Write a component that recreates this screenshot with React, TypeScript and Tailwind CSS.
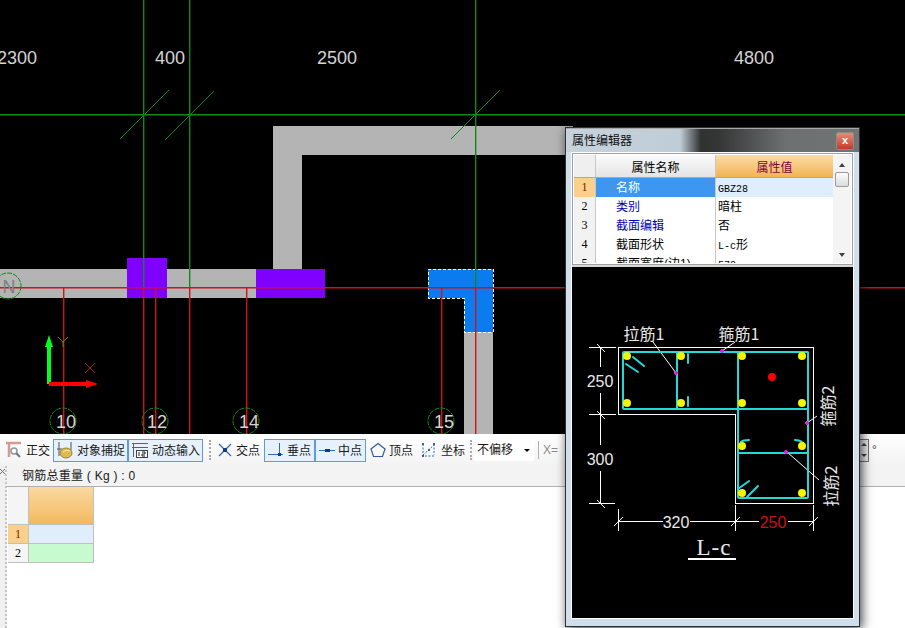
import React from "react";

const grid = "#0f8a16";
const red = "#d01414";
const cyan = "#22d8d8";

function CanvasDrawing() {
  return (
    <svg width="905" height="434" viewBox="0 0 905 434" className="block">
      <rect x="0" y="269" width="127" height="29" fill="#b4b4b4" />
      <rect x="167" y="269" width="89" height="29" fill="#b4b4b4" />
      <rect x="273" y="126" width="29" height="143" fill="#b4b4b4" />
      <rect x="273" y="126" width="300" height="29" fill="#b4b4b4" />
      <rect x="464" y="332" width="29" height="102" fill="#b4b4b4" />
      <rect x="127" y="258" width="40" height="40" fill="#7f00ff" />
      <rect x="256" y="269" width="69" height="29" fill="#7f00ff" />
      <path d="M428 269H493V332H464V298H428Z" fill="#0a7cf0" stroke="#fff" strokeDasharray="3 2" shapeRendering="crispEdges" />
      <g stroke={grid} strokeWidth="1.4">
        <line x1="0" y1="114.7" x2="905" y2="114.7" />
        <line x1="143.7" y1="0" x2="143.7" y2="287" />
        <line x1="189.7" y1="0" x2="189.7" y2="287" />
        <line x1="475.7" y1="0" x2="475.7" y2="287" />
      </g>
      <g stroke={grid}>
        <line x1="120" y1="139" x2="169" y2="90" />
        <line x1="165" y1="140" x2="214" y2="91" />
        <line x1="451" y1="139" x2="500" y2="90" />
      </g>
      <g stroke={red} strokeWidth="1.4">
        <line x1="0" y1="287.7" x2="905" y2="287.7" />
        {[63, 143, 155, 189, 246, 441, 475].map((x) => (
          <line key={x} x1={x + 0.7} y1="287" x2={x + 0.7} y2="434" />
        ))}
      </g>
      <g fill="none" stroke={grid} strokeDasharray="5 1">
        {[[63, 421], [155, 421], [246, 421], [441, 421], [8, 286]].map(([x, y]) => (
          <circle key={x} cx={x} cy={y} r="13" />
        ))}
      </g>
      <g fill="#d4d4d4" fontSize="18" fontFamily="'Liberation Sans', sans-serif">
        <text x="17" y="64" textAnchor="middle">2300</text>
        <text x="170" y="64" textAnchor="middle">400</text>
        <text x="337" y="64" textAnchor="middle">2500</text>
        <text x="754" y="64" textAnchor="middle">4800</text>
        <text x="66" y="428" textAnchor="middle">10</text>
        <text x="157" y="428" textAnchor="middle">12</text>
        <text x="249" y="428" textAnchor="middle">14</text>
        <text x="444" y="428" textAnchor="middle">15</text>
      </g>
      <text x="9" y="293" fill="#808080" fontSize="18" textAnchor="middle" fontFamily="'Liberation Sans', sans-serif">N</text>
      <path d="M47 384V347H45L49 335L53 347H51V384Z" fill="#00ff20" />
      <path d="M49 382H86V380L98 384L86 388V386H49Z" fill="#ff0000" />
      <path d="M58 337L63 342L68 337M63 342V347" stroke="#6a8a20" fill="none" />
      <path d="M85 363L95 373M95 363L85 373" stroke="#a82020" fill="none" />
    </svg>
  );
}

function SectionDrawing() {
  const dots = [[627, 357], [681, 357], [742, 357], [802, 357], [627, 404], [681, 404], [742, 404], [802, 404], [742, 447], [802, 447], [742, 494], [802, 494]];
  const mag = [[722, 352], [676, 374], [807, 424], [786, 453]];
  const cjk = "'Noto Sans CJK SC', sans-serif";
  const lat = "'Liberation Sans', sans-serif";
  return (
    <svg width="281" height="349" viewBox="572 268 281 349" className="block">
      <g stroke="#fff" fill="none" shapeRendering="crispEdges">
        <path d="M618.5 348.5H813.5V504.5H735.5V415.5H618.5Z" />
        <path d="M589 348.5H616M589 415.5H616M589 504.5H615" />
        <path d="M600.5 348V368M600.5 394V446M600.5 472V504" />
        <path d="M618.5 510V532M735.5 506V532M813.5 506V532" />
        <path d="M618 522.5H663M690 522.5H759M788 522.5H813" />
      </g>
      <g stroke="#fff" fill="none">
        <path d="M597 345L605 353M597 412L605 420M597 501L605 509" />
        <path d="M614 527L623 518M731 527L740 518M809 527L818 518" />
        <path d="M653 343L676 374M735 343L722 352M817 417L807 424M787 453L819 481" />
      </g>
      <g stroke={cyan} strokeWidth="2" fill="none" strokeLinecap="round">
        <rect x="623" y="353" width="185" height="57" rx="1" />
        <rect x="738" y="353" width="70" height="146" rx="1" />
        <path d="M677 354V409M738 454H808" />
        <path d="M633 358L644 367M626 365L638 373" />
        <path d="M688 355V364M688 398V407M741 443Q743 441 749 441M795 441Q800 441 803 444" />
        <path d="M738 490L749 482M747 498L758 487" />
      </g>
      {dots.map(([x, y]) => (
        <circle key={`${x}-${y}`} cx={x} cy={y} r="4" fill="#f5f500" />
      ))}
      <circle cx="772" cy="378" r="4" fill="#ff0000" />
      {mag.map(([x, y]) => (
        <path key={x} d={`M${x - 2} ${y}H${x + 2}M${x} ${y - 2}V${y + 2}`} stroke="#e020e0" strokeWidth="2" fill="none" />
      ))}
      <g fill="#e8e8e8" fontSize="16" fontFamily={lat}>
        <text x="600" y="388" textAnchor="middle">250</text>
        <text x="600" y="466" textAnchor="middle">300</text>
        <text x="676" y="529" textAnchor="middle">320</text>
        <text x="773" y="529" textAnchor="middle" fill="#d01010">250</text>
      </g>
      <g fill="#e8e8e8" fontSize="16" fontFamily={cjk}>
        <text x="644" y="341" textAnchor="middle">拉筋1</text>
        <text x="739" y="341" textAnchor="middle">箍筋1</text>
        <text x="0" y="0" textAnchor="middle" transform="translate(827 407) rotate(-90)" dominantBaseline="central">箍筋2</text>
        <text x="0" y="0" textAnchor="middle" transform="translate(830 487) rotate(-90)" dominantBaseline="central">拉筋2</text>
      </g>
      <text x="714" y="556" textAnchor="middle" fill="#e8e8e8" fontSize="23" letterSpacing="1" fontFamily="'Liberation Serif', serif">L-c</text>
      <rect x="688" y="559" width="48" height="2" fill="#fff" />
    </svg>
  );
}

const mono = "font-['Liberation_Mono','Noto_Sans_CJK_SC',monospace] text-[10px]";

const rows = [
  { n: "1", name: "名称", value: <span className={mono}>GBZ28</span>, cn: "bg-[#3d96f0] text-white", vn: "bg-[#dfeefc] text-black", hn: "bg-[#fad08c] text-[#7a1a00]" },
  { n: "2", name: "类别", value: "暗柱", cn: "bg-white text-[#0000c0]", vn: "bg-white text-black", hn: "bg-[#f2f2f2] text-black" },
  { n: "3", name: "截面编辑", value: "否", cn: "bg-white text-[#0000c0]", vn: "bg-white text-black", hn: "bg-[#f2f2f2] text-black" },
  { n: "4", name: "截面形状", value: <><span className={mono}>L-c</span>形</>, cn: "bg-white text-black", vn: "bg-white text-black", hn: "bg-[#f2f2f2] text-black" },
  { n: "5", name: "截面宽度(边1)", value: <span className={mono}>570</span>, cn: "bg-white text-black", vn: "bg-white text-black", hn: "bg-[#f2f2f2] text-black" },
];

function PropertyTable() {
  return (
    <div className="flex h-[112px] border border-[#a0a0a0] bg-white p-px">
      <div className="h-[108px] w-[260px] overflow-hidden">
        <div className="grid h-[23px] grid-cols-[22px_120px_117px] border-b border-[#a8a8a8]">
          <div className="border-r border-[#c8c8c8] bg-[#efefef]" />
          <div className="flex items-center justify-center border-r border-[#c8c8c8] bg-gradient-to-b from-[#fbfbfb] to-[#e4e4e4] pt-[3px] text-[12px] text-black">属性名称</div>
          <div className="flex items-center justify-center bg-gradient-to-b from-[#fbdca6] to-[#f2b452] pt-[3px] text-[12px] text-[#800040]">属性值</div>
        </div>
        {rows.map((r) => (
          <div key={r.n} className="grid h-[19px] grid-cols-[22px_120px_117px] border-b border-[#b8b8b8] text-[12px] leading-[21px]">
            <div className={`border-r border-[#c8c8c8] text-center font-['Liberation_Serif',serif] leading-[18px] ${r.hn}`}>{r.n}</div>
            <div className={`border-r border-[#c8c8c8] pl-[20px] ${r.cn}`}>{r.name}</div>
            <div className={`pl-[2px] ${r.vn}`}>{r.value}</div>
          </div>
        ))}
      </div>
      <div className="flex h-[108px] w-[18px] flex-col items-center bg-[#f4f4f4]">
        <span className="mt-[8px] h-0 w-0 border-x-[3px] border-b-[4px] border-x-transparent border-b-[#404040]" />
        <span className="mt-[5px] h-[15px] w-[14px] rounded-[2px] border border-[#9a9a9a] bg-gradient-to-b from-[#fdfdfd] to-[#dcdcdc]" />
        <span className="mt-auto mb-[6px] h-0 w-0 border-x-[3px] border-t-[4px] border-x-transparent border-t-[#404040]" />
      </div>
    </div>
  );
}

function Dialog() {
  return (
    <div className="absolute top-[127px] left-[565px] flex h-[500px] w-[295px] flex-col border border-[#303030] bg-[#cfdfec] px-[5px] pb-[7px] shadow-[2px_2px_10px_rgba(0,0,0,0.75)]">
      <div className="-mx-[5px] flex h-[24px] shrink-0 items-center justify-between border-t border-[#a8a8a8] bg-[linear-gradient(90deg,#c6d2dc_0%,#c0ccd6_39%,#303232_46%,#343636_52%,#6c7070_75%,#707474_100%)] pr-[5px] pl-[6px]">
        <span className="text-[12px] text-[#101010]">属性编辑器</span>
        <span className="flex h-[18px] w-[18px] items-center justify-center rounded-[2px] border border-[#8a8a8a] bg-gradient-to-b from-[#e88a78] to-[#c03a28] text-[11px] leading-none font-bold text-white">x</span>
      </div>
      <div className="flex min-h-0 flex-1 flex-col gap-[2px] border border-white bg-[#d8d8d8]">
        <PropertyTable />
        <div className="flex-1 overflow-hidden bg-black">
          <SectionDrawing />
        </div>
      </div>
    </div>
  );
}

const Ortho = () => (
  <svg width="18" height="18" viewBox="0 0 18 18" fill="none">
    <path d="M1 2H16M4 2V16" stroke="#d89a90" strokeWidth="2.5" />
    <circle cx="9" cy="10" r="3" stroke="#8a9aa8" strokeWidth="1.5" />
    <path d="M11 12L15 16" stroke="#6a7a88" strokeWidth="2" />
  </svg>
);
const Snap = () => (
  <svg width="18" height="20" viewBox="0 0 18 20" fill="none">
    <path d="M3 2V16M15 2V10" stroke="#505050" />
    <path d="M1 9H6" stroke="#505050" />
    <ellipse cx="10" cy="13" rx="6" ry="5" fill="#e0b850" stroke="#a08030" />
    <path d="M7 12Q10 9 14 11" stroke="#fff0b0" />
  </svg>
);
const Dyn = () => (
  <svg width="18" height="18" viewBox="0 0 18 18" fill="none">
    <path d="M1 2.5H17M1 6.5H17M2.5 2V16" stroke="#606060" />
    <rect x="5.5" y="9.5" width="11" height="7" fill="#fff" stroke="#404040" />
    <path d="M8 11V15M11 11H14V13H11V15H14" stroke="#202020" />
  </svg>
);
const Cross = () => (
  <svg width="16" height="16" viewBox="0 0 16 16" fill="none">
    <path d="M2 2L14 14M14 2L2 14" stroke="#2a6cc0" strokeWidth="1.3" />
    <rect x="6" y="6" width="4" height="4" fill="#153a80" />
  </svg>
);
const Perp = () => (
  <svg width="16" height="16" viewBox="0 0 16 16" fill="none">
    <path d="M0 12.5H15M11.5 1V14" stroke="#2a6cc0" />
    <rect x="10" y="11" width="3" height="3" fill="#153a80" />
  </svg>
);
const Mid = () => (
  <svg width="16" height="16" viewBox="0 0 16 16" fill="none">
    <path d="M0 8.5H16" stroke="#2a6cc0" />
    <rect x="6" y="7" width="5" height="3" fill="#153a80" />
  </svg>
);
const Vertex = () => (
  <svg width="16" height="16" viewBox="0 0 16 16" fill="none">
    <path d="M8 1.5L15 7L12.5 14.5H3.5L1 7Z" stroke="#2a5ca0" strokeWidth="1.2" />
  </svg>
);
const Coord = () => (
  <svg width="18" height="18" viewBox="0 0 18 18" fill="none">
    <path d="M3 3V15H15" stroke="#2a6cc0" strokeDasharray="2 1.5" />
    <path d="M14 3V14M3 14L14 4" stroke="#2a6cc0" strokeDasharray="2 1.5" />
    <circle cx="3" cy="3" r="1" fill="#203a60" />
    <circle cx="14" cy="3" r="1" fill="#203a60" />
    <circle cx="3" cy="15" r="1" fill="#203a60" />
    <circle cx="9" cy="9" r="1" fill="#203a60" />
  </svg>
);

function Tool({ icon, label, on, w }: { icon: React.ReactNode; label: string; on?: boolean; w: string }) {
  return (
    <div className={`flex h-[23px] items-center gap-[3px] ${w} ${on ? "justify-center border border-[#5a9ce0] bg-[#e6f1fb]" : "justify-start"}`}>
      {icon}
      <span className="pt-[1px] whitespace-nowrap text-[12px] text-[#1a1a1a]">{label}</span>
    </div>
  );
}

const Sep = () => <div className="h-[20px] w-0 border-l-2 border-dotted border-[#a8a8a8]" />;

function Toolbar() {
  return (
    <div className="flex h-[32px] shrink-0 items-center bg-gradient-to-b from-white to-[#f3f3f3] pl-[5px]">
      <Tool icon={<Ortho />} label="正交" w="w-[48px]" />
      <Tool icon={<Snap />} label="对象捕捉" on w="w-[75px]" />
      <Tool icon={<Dyn />} label="动态输入" on w="w-[75px]" />
      <div className="mx-[6px]"><Sep /></div>
      <Tool icon={<Cross />} label="交点" w="w-[47px]" />
      <Tool icon={<Perp />} label="垂点" on w="w-[51px]" />
      <Tool icon={<Mid />} label="中点" on w="w-[51px]" />
      <div className="w-[4px]" />
      <Tool icon={<Vertex />} label="顶点" w="w-[50px]" />
      <Tool icon={<Coord />} label="坐标" w="w-[50px]" />
      <Sep />
      <div className="ml-[2px] flex h-[22px] w-[60px] items-center justify-between bg-white pr-[4px] pl-[3px] text-[12px] text-[#1a1a1a]">
        不偏移
        <span className="h-0 w-0 border-x-[3px] border-t-[3px] border-x-transparent border-t-black" />
      </div>
      <div className="mx-[4px] h-[18px] border-l border-[#b0b0b0]" />
      <span className="text-[12px] text-[#8a8a8a]">X=</span>
      <div className="ml-[300px] flex h-[23px] w-[11px] flex-col items-center justify-around border border-[#707070] bg-[#ececec]">
        <span className="h-0 w-0 border-x-[3px] border-b-[3px] border-x-transparent border-b-[#404040]" />
        <span className="h-0 w-0 border-x-[3px] border-t-[3px] border-x-transparent border-t-[#404040]" />
      </div>
      <span className="ml-[3px] text-[12px] text-[#404040]">°</span>
    </div>
  );
}

function BottomTable() {
  return (
    <div className="flex min-w-0 flex-1 flex-col">
      <div className="flex h-[20px] shrink-0 items-center bg-[#f3f3f3] pl-[15px] text-[12px] tracking-[0.25px] text-[#202020]">钢筋总重量&nbsp;(&nbsp;Kg&nbsp;)&nbsp;:&nbsp;0</div>
      <div className="flex-1 border-t border-[#b0b0b0] bg-white pl-px">
        <div className="grid w-[86px] grid-cols-[21px_65px]">
          <div className="h-[38px] border-r border-b border-[#c0c0c0] bg-[#f5f5f5]" />
          <div className="h-[38px] border-r border-b border-[#c0c0c0] bg-gradient-to-b from-[#fbd9a0] to-[#f2b95e]" />
          <div className="h-[19px] border-r border-b border-[#c0c0c0] bg-[#fad08c] text-center font-['Liberation_Serif',serif] text-[12px] leading-[18px] text-[#7a1a00]">1</div>
          <div className="h-[19px] border-r border-b border-[#c0c0c0] bg-[#e0eefc]" />
          <div className="h-[19px] border-r border-b border-[#c0c0c0] bg-[#f5f5f5] text-center font-['Liberation_Serif',serif] text-[12px] leading-[18px] text-black">2</div>
          <div className="h-[19px] border-r border-b border-[#c0c0c0] bg-[#c8fad0]" />
        </div>
      </div>
    </div>
  );
}

export default function App() {
  return (
    <div className="relative flex h-[628px] w-[905px] flex-col overflow-hidden bg-[#f3f3f3] font-['Liberation_Sans','Noto_Sans_CJK_SC',sans-serif]">
      <div className="h-[434px] shrink-0 bg-black">
        <CanvasDrawing />
      </div>
      <Toolbar />
      <div className="flex min-h-0 flex-1">
        <div className="flex w-[7px] shrink-0 flex-col items-center border-r-2 border-dotted border-[#c4c4c4] bg-[#f0f0f0] pt-[2px]">
          <svg width="5" height="8" viewBox="0 0 5 8" fill="none">
            <path d="M0 1L5 6M5 1L0 6" stroke="#707070" />
          </svg>
        </div>
        <BottomTable />
      </div>
      <Dialog />
    </div>
  );
}
